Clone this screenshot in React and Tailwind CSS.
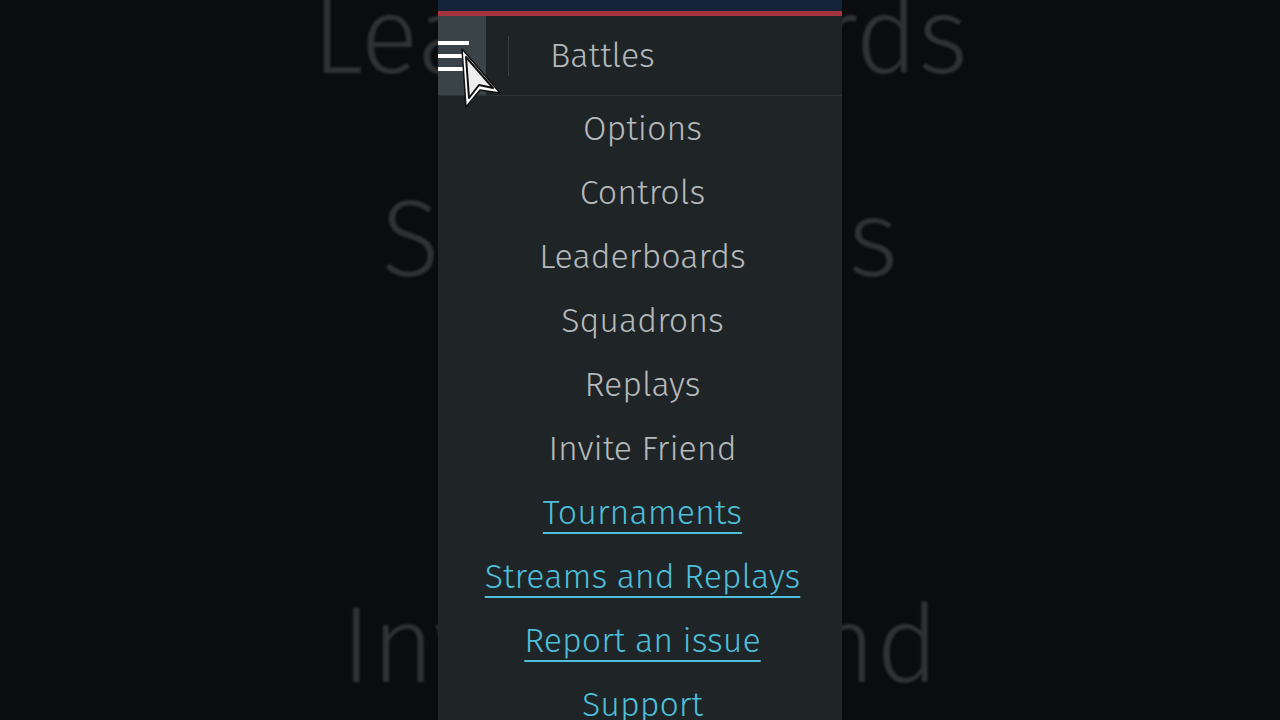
import React from "react";

const items = ["Options", "Controls", "Leaderboards", "Squadrons", "Replays", "Invite Friend"];
const links = ["Tournaments", "Streams and Replays", "Report an issue", "Support"];

export default function App() {
  return (
    <div className="relative w-[1280px] h-[720px] overflow-hidden bg-[#0b0c0d]" style={{ fontFamily: "'Fira Sans', Lato, 'Open Sans', sans-serif" }}>
      {/* blurred video background */}
      <div className="absolute inset-0 flex flex-col items-center text-[#2f3132] font-light text-[108px] leading-[203px] -mt-[64px] blur-[1px]">
        <div>Leaderboards</div>
        <div>Squadrons</div>
        <div>Replays</div>
        <div>Invite Friend</div>
      </div>

      <div className="relative mx-auto w-[404px] h-full flex flex-col bg-[#1f2427]">
        <div className="h-[11px] shrink-0 bg-[#13243a]" />
        <div className="h-[5px] shrink-0 bg-[#a5343f]" />
        <div className="h-[80px] shrink-0 flex items-center border-b border-[#2a3134] bg-[#1e2426]">
          <div className="w-[48px] h-full bg-[#3a4448] flex flex-col justify-center gap-[9px]">
            <div className="w-[31px] h-[4px] bg-white" />
            <div className="w-[26px] h-[4px] bg-white" />
            <div className="w-[26px] h-[4px] bg-white" />
          </div>
          <div className="ml-[22px] w-px h-[40px] bg-[#363e41]" />
          <div className="ml-[41px] text-[34px] font-light text-[#b3b8ba]">Battles</div>
        </div>
        <div className="flex flex-col items-center shrink-0 pl-[5px]">
          {items.map((t) => (
            <div key={t} className="h-[64px] shrink-0 flex items-center text-[34px] font-light text-[#b5b9bb]">{t}</div>
          ))}
          {links.map((t) => (
            <div key={t} className="h-[64px] shrink-0 flex items-center text-[34px] font-light text-[#4dbfd9] underline decoration-2 underline-offset-[8px]">{t}</div>
          ))}
        </div>
      </div>

      {/* mouse cursor */}
      <svg className="absolute left-[455px] top-[43px]" width="52" height="72" viewBox="0 0 52 72">
        <polygon points="7,6 11,64 25,47 45,50" fill="#ffffff" stroke="#111" strokeWidth="1.5" strokeLinejoin="round" />
        <polygon points="11,14 14,55 24,42 38,45" fill="#eeeeee" stroke="#111" strokeWidth="2" strokeLinejoin="round" />
      </svg>
    </div>
  );
}
